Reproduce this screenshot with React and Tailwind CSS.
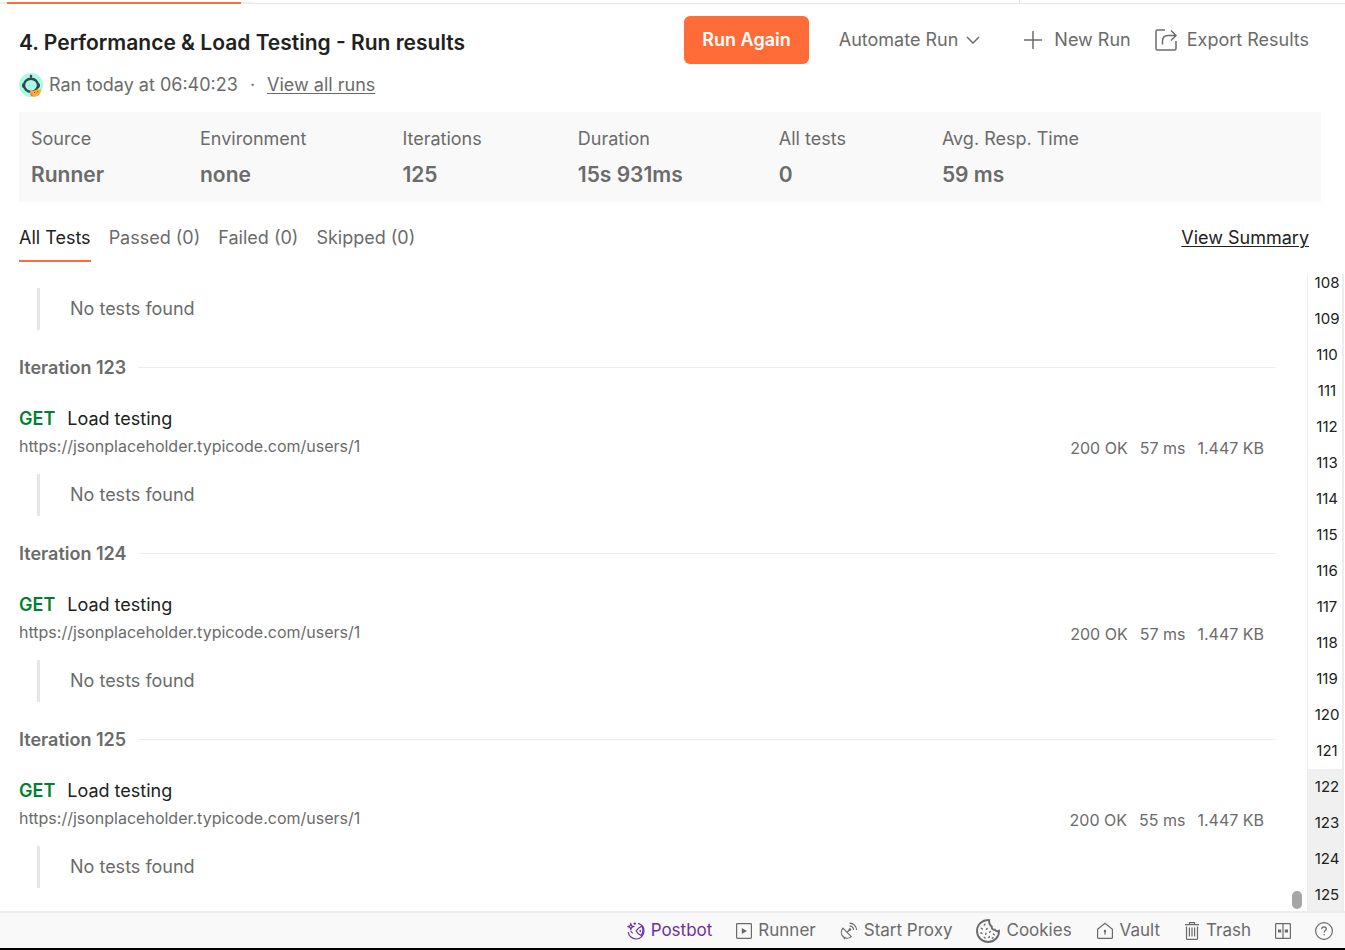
const stats = [
  ["Source", "Runner"],
  ["Environment", "none"],
  ["Iterations", "125"],
  ["Duration", "15s 931ms"],
  ["All tests", "0"],
  ["Avg. Resp. Time", "59 ms"],
];

const tabs = ["All Tests", "Passed (0)", "Failed (0)", "Skipped (0)"];

const iterations = [
  { id: 123, time: "57 ms" },
  { id: 124, time: "57 ms" },
  { id: 125, time: "55 ms" },
];

const pages = Array.from({ length: 18 }, (_, i) => 108 + i);

function Svg({ className, viewBox = "0 0 24 24", children, strokeWidth = 1.5 }) {
  return (
    <svg className={className} viewBox={viewBox} fill="none" stroke="currentColor" strokeWidth={strokeWidth} aria-hidden="true">
      {children}
    </svg>
  );
}

function Avatar() {
  return (
    <svg className="size-6 shrink-0" viewBox="0 0 24 24" aria-hidden="true">
      <circle cx="12" cy="12" r="12" fill="#adf9e1" />
      <circle cx="12" cy="3" r="1.3" fill="#2c4a4e" />
      <path d="M12 3v3" stroke="#2c4a4e" strokeWidth="1.4" />
      <rect x="3" y="10" width="18" height="5" rx="2" fill="#2c4a4e" />
      <ellipse cx="12" cy="12.3" rx="7" ry="6.6" fill="#adf9e1" stroke="#2c4a4e" strokeWidth="2.4" />
      <path d="M11.500 17l2.500.8 2.500-.6 1.500-1 1.500.6 2.500-.8-.4 3.600-1.600 2.600-3.400 1.600-4-.2-1.600-2.600z" fill="#ffab33" />
      <path d="M11.2 20.6l2 .2.6 2-1.6.4z" fill="#ff6c37" />
      <path d="M15 19.5h1M18.2 18.7h1" stroke="#7a4a10" strokeWidth="1" />
    </svg>
  );
}

function PostbotIcon() {
  return (
    <Svg className="size-[18px]" viewBox="0 0 18 18" strokeWidth={1.2}>
      <path d="M3.800 1.800l.8 2 2 .8-2 .8-.8 2-.8-2-2-.8 2-.8z" />
      <path d="M7.800.4v2.400M6.600 1.600H9" />
      <path d="M11 1.400c3.500.9 6 3.900 6 7.600 0 4.400-3.500 8-7.900 8-4.100 0-7.300-3-7.800-6.900" />
      <path d="M15 4.200c-2.600.8-4.600 2.500-5.800 4.900 1 2.200 2.700 3.800 4.900 4.400 1.700-2.100 2.200-6.100.9-9.300z" />
      <path d="M13.200 7.800v2.400M3.800 9l1.800 2.400" />
    </Svg>
  );
}

function RunnerIcon() {
  return (
    <Svg className="size-4" viewBox="0 0 16 16" strokeWidth={1.2}>
      <rect x=".6" y=".6" width="14.800" height="14.800" rx=".8" />
      <path d="M5.800 4.900v6.200l5.200-3.100z" fill="currentColor" stroke="none" />
    </Svg>
  );
}

function ProxyIcon() {
  return (
    <Svg className="size-[18px]" viewBox="0 0 18 18" strokeWidth={1.2}>
      <path d="M2.900 6.200c-2.200 2.600-2.100 6.100.1 8.300 2.200 2.200 5.700 2.300 8.300.1z" />
      <path d="M7 10.500l2.800-2.800M4.800 15.600L4 17.200" />
      <circle cx="9.900" cy="7.600" r="1.300" fill="currentColor" stroke="none" />
      <path d="M9.600 4.200c2.200 0 3.900 1.700 3.900 3.900M9.600 1.200c3.900 0 6.900 3 6.900 6.900" />
    </Svg>
  );
}

function CookieIcon() {
  return (
    <Svg className="size-6" strokeWidth={1.9}>
      <path d="M13.200 1.100C6.800.4 1 5.400 1 12c0 6.100 4.900 11 11 11 6.200 0 11.200-5 11-11.200-1.600.7-3.100.4-4-1-2.200.2-3.600-1.300-3.200-3.300-2-1.200-2.900-3.700-2.600-6.400z" />
      <path
        d="M9 5.200l-.8.900M5.400 9.200l.9.800M11.200 9.400l-.8.800M5 13.800l1 .6M9.800 14.200v1.200M14.400 12.400l-.9.800M8.200 18.200l.9.800M13.400 17.600l-.6 1M17.400 15l.9.700M17 18.600l-.8.600"
        strokeWidth="1.400"
        strokeLinecap="round"
      />
    </Svg>
  );
}

function VaultIcon() {
  return (
    <Svg className="size-[18px]" viewBox="0 0 18 18" strokeWidth={1.2}>
      <path d="M1.600 7.300L9 1.200l7.400 6.100v8.100c0 .6-.4 1-1 1H2.600c-.6 0-1-.4-1-1z" />
      <path d="M9 8.600v4.200" strokeWidth="1.200" />
      <circle cx="9" cy="9" r="1.200" fill="currentColor" stroke="none" />
    </Svg>
  );
}

function TrashIcon() {
  return (
    <Svg className="h-[18px] w-4" viewBox="0 0 16 18" strokeWidth={1.2}>
      <path d="M1 2.600h14M5.500 2.400V.6h5v1.800M2.500 4.600v11.800c0 .6.4 1 1 1h9c.6 0 1-.4 1-1V4.600M5.400 5.500v9M8 5.500v9M10.600 5.500v9" />
    </Svg>
  );
}

function PanesIcon() {
  return (
    <Svg className="size-4" viewBox="0 0 16 16" strokeWidth={1.2}>
      <rect x=".6" y=".6" width="14.800" height="14.800" rx=".6" />
      <path d="M8 .6v14.800" />
      <path d="M3 6.400h3.200v3.200H3zM9.800 6.400H13v3.200H9.800z" fill="currentColor" stroke="none" />
    </Svg>
  );
}

function HelpIcon() {
  return (
    <Svg className="size-[18px]" viewBox="0 0 18 18" strokeWidth={1.2}>
      <circle cx="9" cy="9" r="8.400" />
      <path d="M6.700 7.100c0-1.300 1-2.200 2.300-2.200s2.300.8 2.300 2.100c0 1.500-2.200 1.700-2.200 3.500" />
      <circle cx="9.100" cy="12.800" r=".8" fill="currentColor" stroke="none" />
    </Svg>
  );
}

function NoTests() {
  return (
    <div className="ml-[18px] flex h-[42px] items-center border-l-3 border-[#e6e6e6] pl-[30px] text-lg">
      No tests found
    </div>
  );
}

function Iteration({ id, time }) {
  return (
    <section>
      <div className="mt-6 flex items-center gap-3">
        <h2 className="text-lg leading-[27px] font-semibold">Iteration {id}</h2>
        <div className="h-px flex-1 bg-[#ededed]" />
      </div>
      <div className="mt-6 mb-[15px] flex items-end justify-between pr-3">
        <div>
          <div className="flex gap-3 text-lg leading-7">
            <span className="font-semibold text-[#007f31]">GET</span>
            <span className="text-[#212121]">Load testing</span>
          </div>
          <div className="text-base leading-[26px]">https://jsonplaceholder.typicode.com/users/1</div>
        </div>
        <div className="flex gap-3 text-base leading-[22px]">
          <span>200 OK</span>
          <span>{time}</span>
          <span>1.447 KB</span>
        </div>
      </div>
      <NoTests />
    </section>
  );
}

function FooterButton({ icon, children, className = "" }) {
  return (
    <button type="button" className={`flex items-center gap-1.5 whitespace-nowrap ${className}`}>
      {icon}
      {children}
    </button>
  );
}

export default function App() {
  return (
    <div className="flex h-screen flex-col overflow-hidden bg-white font-['Inter',sans-serif] text-lg text-[#6b6b6b]">
      <div className="flex h-1 shrink-0 items-end">
        <div className="h-0.5 w-[7px] bg-[#ededed]" />
        <div className="h-0.5 w-[234px] bg-[#ff6c37]" />
        <div className="h-0.5 w-3 bg-[#ededed]" />
        <div className="h-px flex-1 bg-[#e6e6e6]" />
        <div className="h-full w-px bg-[#e6e6e6]" />
        <div className="h-px w-[325px] bg-[#e6e6e6]" />
      </div>

      <header className="flex shrink-0 items-start justify-between pt-3 pr-9 pl-[19px]">
        <div>
          <h1 className="mt-[13px] text-[21px] leading-7 font-semibold text-[#212121]">
            4. Performance &amp; Load Testing - Run results
          </h1>
          <div className="mt-4 flex items-center gap-1.5 leading-6">
            <Avatar />
            <span>Ran today at 06:40:23</span>
            <span className="mx-1.5">·</span>
            <a href="#runs" className="underline decoration-1 underline-offset-2">View all runs</a>
          </div>
        </div>
        <div className="flex items-center gap-6">
          <button type="button" className="mr-1.5 h-12 rounded-md bg-[#ff6c37] px-[18px] font-semibold text-white">
            Run Again
          </button>
          <button type="button" className="mr-5 flex items-center gap-2">
            Automate Run
            <Svg className="h-2 w-3.5" viewBox="0 0 14 8">
              <path d="M1 1l6 6 6-6" />
            </Svg>
          </button>
          <button type="button" className="flex items-center gap-3">
            <Svg className="size-[18px]" viewBox="0 0 18 18">
              <path d="M9 0v18M0 9h18" />
            </Svg>
            New Run
          </button>
          <button type="button" className="flex items-center gap-2.5">
            <Svg className="size-[22px]" viewBox="0 0 22 22">
              <path d="M10 1H2.500C1.700 1 1 1.700 1 2.500v17c0 .8.700 1.500 1.500 1.500h17c.8 0 1.500-.7 1.500-1.500V12" />
              <path d="M7.500 15.500v-3.500c0-3.300 2.200-5.500 5.500-5.500h8M16 1.500l5 5-5 5" />
            </Svg>
            Export Results
          </button>
        </div>
      </header>

      <dl className="mt-[15px] mr-6 ml-[19px] flex shrink-0 gap-24 bg-[#f9f9f9] px-3 pt-3 pb-1.5">
        {stats.map(([label, value]) => (
          <div key={label}>
            <dt className="leading-[30px]">{label}</dt>
            <dd className="text-[21px] leading-[42px] font-semibold">{value}</dd>
          </div>
        ))}
      </dl>

      <nav className="mt-3 mr-9 flex h-12 shrink-0 items-stretch gap-[18px] pl-[19px]">
        {tabs.map((tab, i) => (
          <button
            key={tab}
            type="button"
            className={i === 0 ? "border-b-2 border-[#ff6c37] pt-0.5 text-[#212121]" : "border-b-2 border-transparent pt-0.5"}
          >
            {tab}
          </button>
        ))}
        <a href="#summary" className="ml-auto self-center text-[#212121] underline decoration-1 underline-offset-2">
          View Summary
        </a>
      </nav>

      <main className="mt-3 flex min-h-0 flex-1">
        <div className="relative min-w-0 flex-1 overflow-hidden pt-3.5 pr-[31px] pl-[19px]">
          <NoTests />
          {iterations.map((it) => (
            <Iteration key={it.id} {...it} />
          ))}
          <div className="absolute right-[5px] bottom-0.5 h-[18px] w-2.5 rounded-full bg-[#a6a6a6]" />
        </div>
        <div className="mr-px w-[37px] overflow-hidden border-r-2 border-l border-[#ededed]">
          <ol className="-mt-[9px] text-[15px] text-[#212121]">
            {pages.map((n) => (
              <li key={n} className={n >= 122 ? "bg-[#f0f0f0]" : ""}>
                <a href={`#iteration-${n}`} className="flex h-9 items-center justify-center pl-1">{n}</a>
              </li>
            ))}
          </ol>
        </div>
      </main>

      <footer className="flex h-[39px] shrink-0 items-center justify-end gap-6 border-t-2 border-b-2 border-t-[#ededed] border-b-black bg-[#f9f9f9] pr-3 text-[17px]">
        <FooterButton icon={<PostbotIcon />} className="text-[#6b2fa0]">Postbot</FooterButton>
        <FooterButton icon={<RunnerIcon />}>Runner</FooterButton>
        <FooterButton icon={<ProxyIcon />}>Start Proxy</FooterButton>
        <FooterButton icon={<CookieIcon />}>Cookies</FooterButton>
        <FooterButton icon={<VaultIcon />}>Vault</FooterButton>
        <FooterButton icon={<TrashIcon />}>Trash</FooterButton>
        <button type="button" aria-label="Two-pane view"><PanesIcon /></button>
        <button type="button" aria-label="Help"><HelpIcon /></button>
      </footer>
    </div>
  );
}
